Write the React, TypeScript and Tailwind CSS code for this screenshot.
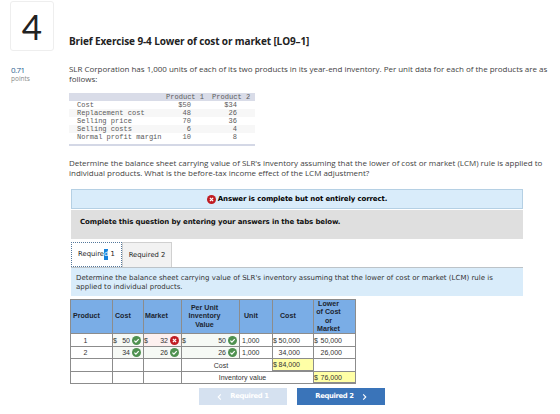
import type { ReactNode } from 'react';
import { clsx } from 'clsx';

const unitData = [
  ['Cost', '$50', '$34'],
  ['Replacement cost', '48', '26'],
  ['Selling price', '70', '36'],
  ['Selling costs', '6', '4'],
  ['Normal profit margin', '10', '8'],
];

function Mark({ ok, className }: { ok?: boolean; className?: string }) {
  return (
    <svg viewBox="0 0 18 18" className={clsx('shrink-0', className)} fill="none" stroke="#fff">
      <circle cx="9" cy="9" r="9" fill={ok ? '#4f9150' : '#c01c22'} stroke="none" />
      {ok ? (
        <path d="M4.8 9.3l3 3 5.6-6" strokeWidth="2.4" />
      ) : (
        <path d="M5.8 5.8l6.4 6.4M12.2 5.8l-6.4 6.4" strokeWidth="2.6" />
      )}
    </svg>
  );
}

function Cell({ className, children }: { className?: string; children?: ReactNode }) {
  return (
    <div className={clsx('flex items-center border-r border-b border-[#8c8c8c] leading-none', className)}>
      {children}
    </div>
  );
}

function Head({ className, children }: { className?: string; children: ReactNode }) {
  return (
    <Cell className={clsx('bg-[#7aade6] text-[7.1px] font-bold text-[#1c2530]', className)}>
      <span className="leading-[8.3px]">{children}</span>
    </Cell>
  );
}

function Answer({ value, dollar, ok = true }: { value: string; dollar?: boolean; ok?: boolean }) {
  return (
    <Cell className={clsx('justify-between pr-[2px]', ok ? 'bg-[#f6f9f5]' : 'bg-[#fdf0ef]')}>
      <span>{dollar && '$'}</span>
      <span className="flex items-center gap-[2px]">
        {value}
        <Mark ok={ok} className="h-[9px] w-[9px]" />
      </span>
    </Cell>
  );
}

function Amount({ value, dollar, total }: { value: string; dollar?: boolean; total?: boolean }) {
  return (
    <Cell className={clsx('justify-between pr-[13px]', total && 'border-b-2 bg-[#ffffa6]')}>
      <span>{dollar && '$'}</span>
      <span>{value}</span>
    </Cell>
  );
}

function UnitTable() {
  return (
    <div className="mt-[9.5px] w-[186px] border-b-2 border-[#d4d8e6] pb-[3.5px] font-['Liberation_Mono',monospace] text-[7.05px] leading-[8px] text-[#5a5a5a]">
      <div className="flex h-2 bg-[#d9dce8]">
        <span className="ml-[97px]">Product 1</span>
        <span className="ml-[8px]">Product 2</span>
      </div>
      {unitData.map(([label, first, second], i) => (
        <div key={label} className={clsx('flex h-2', i % 2 === 1 && 'bg-[#f7f7f7]')}>
          <span className="w-[97px] pl-2 whitespace-nowrap">{label}</span>
          <span className="w-[25px] text-right">{first}</span>
          <span className="w-[46px] text-right">{second}</span>
        </div>
      ))}
    </div>
  );
}

function AnswerTable() {
  return (
    <div className="mt-[3px] -ml-px grid w-[286px] grid-cols-[42px_31px_38px_58px_33px_41px_42px] grid-rows-[34px_13px_12px_13px_12px] border-t border-l border-[#8c8c8c] font-['Liberation_Sans',Arial,sans-serif] text-[7px] text-[#333]">
      <Head className="pl-[2px]">Product</Head>
      <Head className="pl-[2px]">Cost</Head>
      <Head className="pl-px">Market</Head>
      <Head className="justify-center pr-3 text-center">Per Unit<br />Inventory<br />Value</Head>
      <Head className="pl-1">Unit</Head>
      <Head className="pl-[7px]">Cost</Head>
      <Head className="justify-center pr-3 text-center">Lower<br />of Cost<br />or<br />Market</Head>

      <Cell className="justify-center pr-3">1</Cell>
      <Answer value="50" dollar />
      <Answer value="32" dollar ok={false} />
      <Answer value="50" dollar />
      <Cell className="pl-[2px]">1,000</Cell>
      <Amount value="50,000" dollar />
      <Amount value="50,000" dollar />

      <Cell className="justify-center pr-3">2</Cell>
      <Answer value="34" />
      <Answer value="26" />
      <Answer value="26" />
      <Cell className="pl-[2px]">1,000</Cell>
      <Amount value="34,000" />
      <Amount value="26,000" />

      <Cell />
      <Cell />
      <Cell />
      <Cell className="col-span-2 justify-center pr-[12px]">Cost</Cell>
      <Amount value="84,000" dollar total />
      <Cell />

      <Cell />
      <Cell />
      <Cell />
      <Cell className="col-span-3 justify-center pr-[10px]">Inventory value</Cell>
      <Amount value="76,000" dollar total />
    </div>
  );
}

function Chevron({ left }: { left?: boolean }) {
  return (
    <svg viewBox="0 0 5 7" className="h-[6px] w-[5px]" fill="none" stroke="currentColor" strokeWidth="1.3">
      <path d={left ? 'M4 .5L1 3.5l3 3' : 'M1 .5l3 3-3 3'} />
    </svg>
  );
}

export default function App() {
  return (
    <div className="flex h-[414px] w-[560px] overflow-hidden bg-white font-['Open_Sans',sans-serif] text-[#3f3f3f]">
      <aside className="w-[69px] shrink-0 pt-px pl-[10px]">
        <div className="flex h-[50px] w-[44px] items-center justify-center rounded-[3px] border border-[#eeeeee] font-['Lato',sans-serif] text-[35px] text-[#222]">
          4
        </div>
        <div className="mt-[14px] pl-px text-[8px] leading-[9px] tracking-[-0.6px] text-[#2d5f91]">0.71</div>
        <div className="pl-px text-[6.5px] leading-[9px] text-[#8a8a8a]">points</div>
      </aside>

      <main className="w-[491px] shrink-0 whitespace-nowrap">
        <h1 className="mt-[35px] text-[10px] leading-[13px] font-bold tracking-[-0.12px] text-[#222]">
          Brief Exercise 9-4 Lower of cost or market [LO9–1]
        </h1>
        <p className="mt-[16px] text-[8px] leading-[9.5px] tracking-[-0.02px]">
          SLR Corporation has 1,000 units of each of its two products in its year-end inventory. Per unit data for each of the products are as
          <br />
          follows:
        </p>

        <UnitTable />

        <p className="mt-[12px] text-[8px] leading-[9.5px] tracking-[-0.015px]">
          Determine the balance sheet carrying value of SLR's inventory assuming that the lower of cost or market (LCM) rule is applied to
          <br />
          individual products. What is the before-tax income effect of the LCM adjustment?
        </p>

        <section className="mt-[12px] ml-[2px] w-[452px] font-['DejaVu_Sans',Verdana,sans-serif] text-[7px]">
          <div className="flex h-5 items-center justify-center gap-[2px] border border-[#b5d0e4] bg-[#d9ecfa] font-bold tracking-[-0.12px] text-black">
            <Mark className="h-[9px] w-[9px]" />
            Answer is complete but not entirely correct.
          </div>
          <div className="mt-px h-[29px] bg-[#dfdfdf] pt-2 pl-[9px] leading-[8px] font-bold tracking-[-0.12px] text-[#111]">
            Complete this question by entering your answers in the tabs below.
          </div>

          <div className="mt-[3px] flex h-[25px] text-[6.8px]">
            <div className="flex w-[51px] items-center justify-center border border-dotted border-[#54789c] bg-white text-[#222]">
              Require<span className="bg-[#1681db] text-white">d</span>&nbsp;1
            </div>
            <div className="flex w-[50px] items-center justify-center border border-b-0 border-[#d0d0d0] bg-[#f2f2f2] text-[#222]">
              Required 2
            </div>
          </div>
          <div className="h-[29px] border-t border-[#bcc3c8] bg-[#d9ecfa] pt-[6px] pl-[5px] leading-[8.5px] tracking-[0.01px] text-[#333]">
            Determine the balance sheet carrying value of SLR's inventory assuming that the lower of cost or market (LCM) rule is
            <br />
            applied to individual products.
          </div>

          <AnswerTable />

          <div className="mt-[4px] ml-[128px] flex gap-[10px] text-[6.8px] font-bold tracking-[-0.35px] text-white">
            <div className="flex h-[17px] w-[88px] items-center justify-center gap-2 bg-[#d5e1f0]">
              <Chevron left />
              Required 1
            </div>
            <div className="flex h-[17px] w-[88px] items-center justify-center gap-2 bg-[#3a74b9]">
              Required 2
              <Chevron />
            </div>
          </div>
        </section>
      </main>
    </div>
  );
}
